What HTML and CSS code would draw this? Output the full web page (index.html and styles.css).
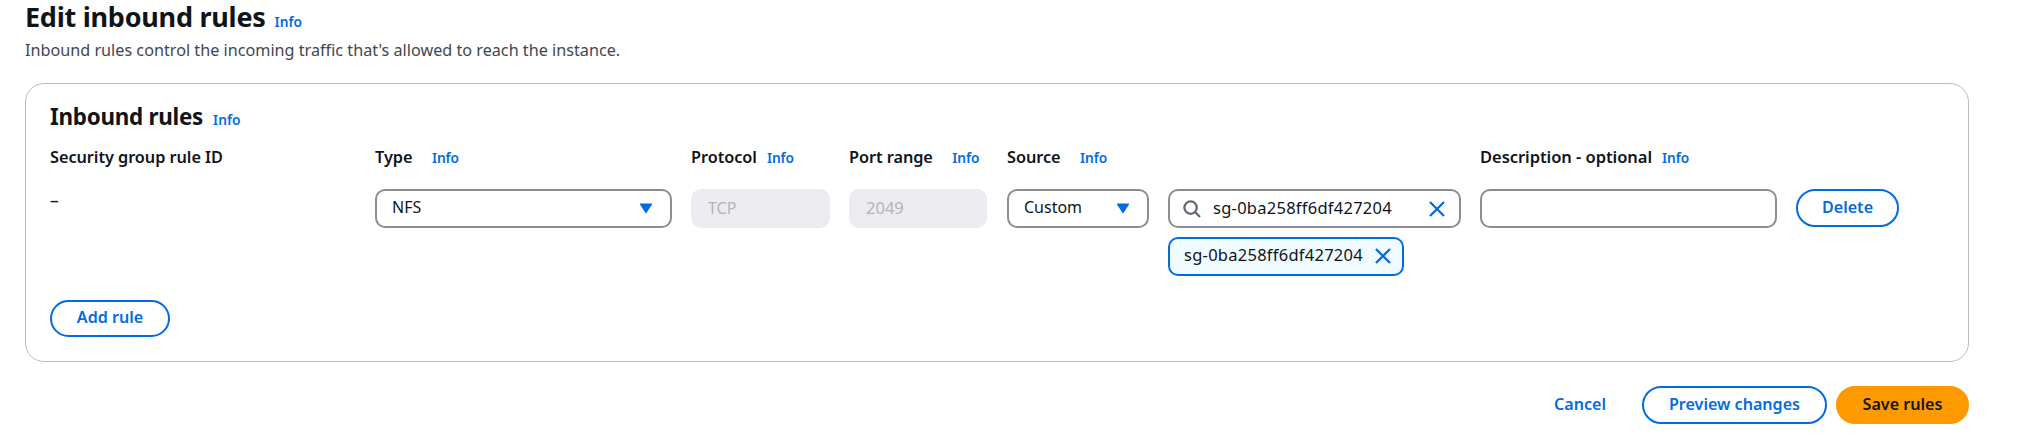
FILE: index.html
```
<!DOCTYPE html>
<html lang="en">
<head>
<meta charset="utf-8">
<title>Edit inbound rules</title>
<link rel="stylesheet" href="styles.css">
</head>
<body>
<main class="page">
  <header class="page-header">
    <h1 class="page-title">Edit inbound rules</h1>
    <a class="info info-title">Info</a>
  </header>
  <p class="page-description">Inbound rules control the incoming traffic that's allowed to reach the instance.</p>

  <section class="card">
    <div class="card-header">
      <h2 class="card-title">Inbound rules</h2>
      <a class="info info-card">Info</a>
    </div>

    <div class="rules">
      <div class="label">Security group rule ID</div>
      <div class="label label-wide">Type <a class="info">Info</a></div>
      <div class="label">Protocol <a class="info">Info</a></div>
      <div class="label label-wide">Port range <a class="info">Info</a></div>
      <div class="label label-wide label-source">Source <a class="info">Info</a></div>
      <div class="label label-description">Description - optional <a class="info">Info</a></div>
      <div></div>

      <div class="rule-id">–</div>
      <div class="field select">NFS
        <svg class="caret" viewBox="0 0 14 11"><path d="M1.6 1.1h10.8L7 9.4z"/></svg>
      </div>
      <div class="field field-disabled">TCP</div>
      <div class="field field-disabled field-port">2049</div>
      <div class="field select">Custom
        <svg class="caret" viewBox="0 0 14 11"><path d="M1.6 1.1h10.8L7 9.4z"/></svg>
      </div>
      <div class="source">
        <div class="field search">
          <svg class="search-icon" viewBox="0 0 18 18"><circle cx="7.6" cy="7.6" r="6.2"/><path d="M12 12l5 5"/></svg>
          <span class="sg-id">sg-0ba258ff6df427204</span>
          <svg class="close" viewBox="0 0 16 16"><path d="M1 1l14 14M15 1L1 15"/></svg>
        </div>
        <div class="token">
          <span class="sg-id">sg-0ba258ff6df427204</span>
          <svg class="close" viewBox="0 0 16 16"><path d="M1 1l14 14M15 1L1 15"/></svg>
        </div>
      </div>
      <div class="field"></div>
      <button class="button button-delete">Delete</button>
    </div>

    <button class="button button-add">Add rule</button>
  </section>

  <footer class="actions">
    <button class="button button-link">Cancel</button>
    <button class="button button-preview">Preview changes</button>
    <button class="button button-primary">Save rules</button>
  </footer>
</main>
</body>
</html>
```
FILE: styles.css
```
* {
  box-sizing: border-box;
}

body {
  margin: 0;
  background: #fff;
  color: #0f141a;
  font-family: "Noto Sans", "Open Sans", sans-serif;
  font-size: 16.3px;
  line-height: 24px;
}

.page {
  width: 1969px;
  padding: 1px 0 0 25px;
}

.page-header,
.card-header {
  display: flex;
  align-items: baseline;
}

.page-title {
  margin: 0;
  font-size: 27px;
  font-weight: 670;
  letter-spacing: -0.25px;
  line-height: 32px;
}

.page-description {
  margin: 5px 0 0;
  color: #424650;
  font-size: 16.2px;
}

.info {
  color: #006ce0;
  font-size: 13.7px;
  font-weight: 620;
  line-height: 18px;
}

.info-title {
  margin-left: 9px;
}

.info-card {
  margin-left: 10px;
}

.card {
  height: 279px;
  margin-top: 21px;
  padding: 19px 24px 0;
  border: 1px solid #bcbcc2;
  border-radius: 19px;
}

.card-title {
  margin: 0;
  font-size: 22.4px;
  font-weight: 670;
  letter-spacing: -0.25px;
  line-height: 28px;
}

.rules {
  display: grid;
  grid-template-columns: 306px 297px 139px 139px 142px 293px 297px 103px;
  column-gap: 19px;
  align-items: start;
  margin-top: 14px;
}

.label {
  display: flex;
  align-items: baseline;
  gap: 10px;
  height: 44px;
  font-weight: 640;
  letter-spacing: -0.05px;
  white-space: nowrap;
}

.label-wide {
  gap: 19.5px;
}

.label-source {
  grid-column: span 2;
}

.label-description {
  font-size: 16.5px;
}

.rule-id {
  margin-top: -1px;
  font-size: 17.5px;
  line-height: 24px;
}

.field {
  display: flex;
  align-items: center;
  height: 39px;
  padding: 0 17px 2px 15px;
  border: 2px solid #8c8c94;
  border-radius: 10px;
  background: #fff;
  font-size: 16px;
}

.select {
  justify-content: space-between;
  padding-bottom: 3px;
}

.field-disabled {
  border-color: #ebebf0;
  background: #ebebf0;
  color: #b4b4bb;
}

.field-port {
  width: 138px;
  font-size: 16.5px;
}

.caret {
  width: 14px;
  height: 11px;
  margin-top: 3px;
  fill: #006ce0;
  stroke: #006ce0;
  stroke-width: 1.4;
  stroke-linejoin: round;
}

.source {
  display: flex;
  flex-direction: column;
  align-items: flex-start;
  gap: 9px;
}

.search {
  width: 100%;
  padding: 0 14px 2px 13px;
}

.search-icon {
  width: 18px;
  height: 18px;
  margin: 2px 12px 0 0;
  fill: none;
  stroke: #656871;
  stroke-width: 2.3;
}

.sg-id {
  font-size: 16.5px;
  letter-spacing: 0.26px;
}

.close {
  width: 16px;
  height: 16px;
  margin: 2px 0 0 auto;
  fill: none;
  stroke: #006ce0;
  stroke-width: 2.3;
}

.token {
  display: flex;
  align-items: center;
  width: 236px;
  height: 39px;
  padding: 0 11px 3px 14px;
  border: 2px solid #006ce0;
  border-radius: 10px;
  background: #f0fbff;
}

.button {
  display: block;
  height: 38px;
  padding: 0 0 2px;
  border: 2px solid #006ce0;
  border-radius: 20px;
  background: #fff;
  color: #006ce0;
  font: 640 16.1px/24px "Noto Sans", "Open Sans", sans-serif;
}

.button-delete {
  width: 103px;
}

.button-add {
  width: 120px;
  height: 37px;
  margin-top: 24px;
  padding-bottom: 3px;
}

.actions {
  display: flex;
  justify-content: flex-end;
  margin-top: 24px;
}

.button-link {
  margin-right: 34px;
  border-color: transparent;
}

.button-preview {
  width: 185px;
  margin-right: 9px;
}

.button-primary {
  width: 133px;
  border-color: #ff9900;
  background: #ff9900;
  color: #0f141a;
}
```
